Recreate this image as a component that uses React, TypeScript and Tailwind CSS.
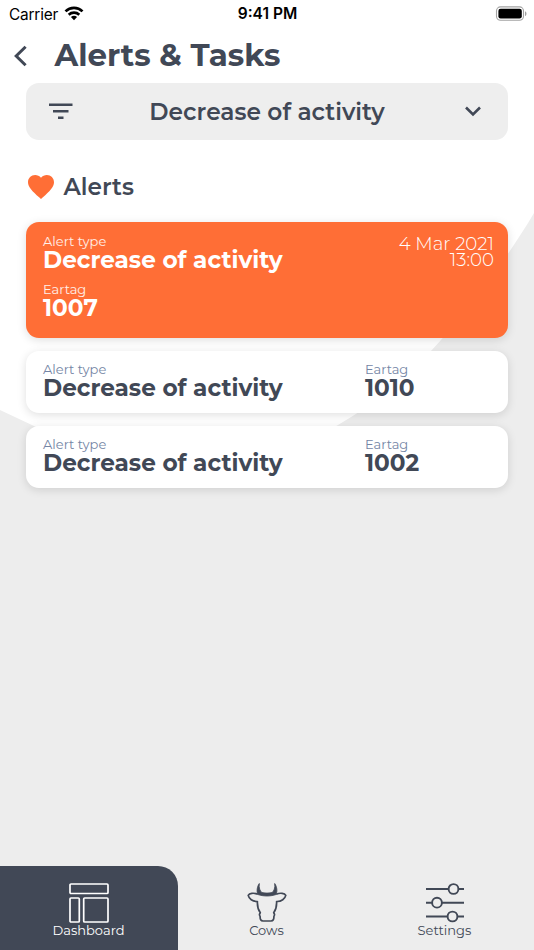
import type { ReactNode } from "react";

type Alert = { type: string; eartag: string };

const alerts: Alert[] = [
  { type: "Decrease of activity", eartag: "1010" },
  { type: "Decrease of activity", eartag: "1002" },
];

function StatusBar() {
  return (
    <div className="grid h-7 grid-cols-3 items-center pl-[9px] pr-[7px] font-['Inter',sans-serif] text-black">
      <div className="flex items-center gap-[6px]">
        <span className="pt-px text-[15.4px] tracking-[-0.2px]">Carrier</span>
        <svg width="20" height="15" viewBox="0 0 20 15" className="mb-px">
          <path d="M1.5 5.4a12.2 12.2 0 0 1 17 0" fill="none" stroke="black" strokeWidth="2.7" />
          <path d="M4.7 8.7a7.7 7.7 0 0 1 10.6 0" fill="none" stroke="black" strokeWidth="2.6" />
          <path d="M10 14.2 6.9 11.1a4.5 4.5 0 0 1 6.2 0z" fill="black" />
        </svg>
      </div>
      <span className="-ml-px text-center text-[15.5px] font-semibold">9:41 PM</span>
      <svg width="32" height="15" viewBox="0 0 32 15" className="mb-[2px] ml-auto">
        <rect x="1.5" y="0.9" width="27" height="13.4" rx="4" fill="none" stroke="#a3a3a3" strokeWidth="1.1" />
        <rect x="3.4" y="2.7" width="23.4" height="9.8" rx="2.2" fill="black" />
        <path d="M30.2 5.2c1.6.7 1.6 4.1 0 4.8z" fill="#8a8a8a" />
      </svg>
    </div>
  );
}

function Field({ label, value, labelClass }: { label: string; value: string; labelClass: string }) {
  return (
    <div className="whitespace-nowrap">
      <p className={`text-[13px] leading-[15px] ${labelClass}`}>{label}</p>
      <p className="text-[23.2px] font-bold leading-[23px]">{value}</p>
    </div>
  );
}

function AlertCard({ alert }: { alert: Alert }) {
  return (
    <div className="flex h-[62px] rounded-[13px] bg-white pl-[17px] pt-[11px] shadow-[0_2px_10px_rgba(0,0,0,0.13)]">
      <div className="w-[322px]">
        <Field label="Alert type" value={alert.type} labelClass="text-[#7485a5]" />
      </div>
      <Field label="Eartag" value={alert.eartag} labelClass="text-[#7485a5]" />
    </div>
  );
}

function NavItem({ label, active, children }: { label: string; active?: boolean; children: ReactNode }) {
  return (
    <button
      type="button"
      className={`flex flex-col items-center pt-4 ${active ? "rounded-tr-[20px] bg-[#414856] text-white" : "text-[#414856]"}`}
    >
      {children}
      <span className="-mt-px pr-px text-[13px] leading-4">{label}</span>
    </button>
  );
}

export default function App() {
  return (
    <div className="relative isolate flex h-[950px] w-[534px] flex-col overflow-hidden bg-[#ededed] font-['Montserrat','Inter',sans-serif] text-[#414856]">
      <svg className="absolute inset-0 -z-10" width="534" height="500" viewBox="0 0 534 500">
        <path
          d="M0 410 34 426C80 448 130 462 185 462C240 462 290 452 338 425C375 403 405 381 431 351C465 315 505 262 534 213V0H0z"
          fill="white"
        />
      </svg>

      <StatusBar />

      <header className="mt-[9px] flex h-9 items-center">
        <svg width="16" height="22" viewBox="0 0 16 22" className="ml-3 mt-[2px]" fill="none" stroke="currentColor" strokeWidth="3">
          <path d="M13.6 1.8 4.2 11l9.4 9.2" />
        </svg>
        <h1 className="ml-[26.5px] text-[30.9px] font-bold leading-9">Alerts &amp; Tasks</h1>
      </header>

      <main className="flex-1 px-[26px] pt-[10px]">
        <button type="button" className="flex h-[56.5px] w-full items-center rounded-[13px] bg-[#eeeeee] px-[23px]">
          <svg width="24" height="17" viewBox="0 0 24 17" fill="currentColor">
            <path d="M0 0.6h23.5v2.5H0zM4 7.1h15.5v2.5H4zM9 13.4h5.500v2.500H9z" />
          </svg>
          <span className="flex-1 pt-[2px] text-center text-[23.3px] font-semibold">Decrease of activity</span>
          <svg width="24" height="14" viewBox="0 0 24 14" fill="none" stroke="currentColor" strokeWidth="2.6">
            <path d="m5 3.500 7 7 7-7" />
          </svg>
        </button>

        <div className="mt-[31.5px] flex h-[31px] items-center">
          <svg width="26" height="24" viewBox="2 3 20 18.35" preserveAspectRatio="none" className="ml-[2px]">
            <path
              fill="#ff6e36"
              d="m12 21.350-1.450-1.320C5.400 15.360 2 12.280 2 8.500 2 5.420 4.420 3 7.500 3c1.740 0 3.410.81 4.500 2.090C13.090 3.810 14.760 3 16.500 3 19.580 3 22 5.420 22 8.500c0 3.780-3.400 6.860-8.550 11.540z"
            />
          </svg>
          <h2 className="ml-[9.5px] pt-px text-[23.2px] font-semibold">Alerts</h2>
        </div>

        <div className="mt-5 flex flex-col gap-[13px]">
          <div className="flex h-[115.5px] justify-between rounded-[13px] bg-[#ff6e36] pl-[17px] pr-[14px] pt-[11.5px] text-white shadow-[0_2px_10px_rgba(0,0,0,0.13)]">
            <div className="flex flex-col gap-[10px]">
              <Field label="Alert type" value="Decrease of activity" labelClass="text-white/90" />
              <Field label="Eartag" value="1007" labelClass="text-white/90" />
            </div>
            <p className="pt-[2.5px] text-right text-[18.2px] font-light leading-4">
              4 Mar 2021
              <br />
              13:00
            </p>
          </div>
          {alerts.map((alert) => (
            <AlertCard key={alert.eartag} alert={alert} />
          ))}
        </div>
      </main>

      <nav className="grid h-[84px] grid-cols-3">
        <NavItem label="Dashboard" active>
          <svg width="40" height="41" viewBox="0 0 40 41" fill="none" stroke="currentColor" strokeWidth="1.7">
            <rect x="1" y="2" width="38" height="9.5" rx="1" />
            <rect x="1" y="16" width="9.3" height="24" rx="1" />
            <rect x="14.7" y="16" width="24.3" height="24" rx="1" />
          </svg>
        </NavItem>
        <NavItem label="Cows">
          <svg width="40" height="41" viewBox="0 0 40 41" fill="none" stroke="currentColor" strokeWidth="1.7" strokeLinejoin="round">
            <path
              d="M12.300 1.500C9.800 5 9.600 9.500 10.800 12.500c6 2 12.400 2 18.400 0C30.400 9.500 30.200 5 27.700 1.500 28.300 6 27 9 25 10.600q-5 1-10 0C13 9 11.700 6 12.300 1.500z"
              fill="currentColor"
              strokeWidth="0.8"
            />
            <path d="M10.800 12.300C6.500 10.500 2.400 11.200 1.200 13.400c.8 3.400 4.300 6.300 9.200 6.100-.2 4.300.6 8 2.900 11.300-1.200 1.200-.8 2.700-.2 3.600-.1 2.900.7 4.600 2.900 4.600h8c2.200 0 3-1.700 2.900-4.600.6-.9 1-2.400-.2-3.600 2.300-3.300 3.100-7 2.900-11.300 4.900.2 8.400-2.700 9.200-6.100C37.600 11.200 33.500 10.500 29.200 12.300" />
          </svg>
        </NavItem>
        <NavItem label="Settings">
          <svg width="40" height="41" viewBox="0 0 40 41" fill="#ededed" stroke="currentColor" strokeWidth="1.9">
            <path d="M1 7h38M1 20.700h38M1 34.500h38" />
            <circle cx="28.500" cy="7" r="4.900" />
            <circle cx="12" cy="20.700" r="4.900" />
            <circle cx="27.500" cy="34.500" r="4.900" />
          </svg>
        </NavItem>
      </nav>
    </div>
  );
}
